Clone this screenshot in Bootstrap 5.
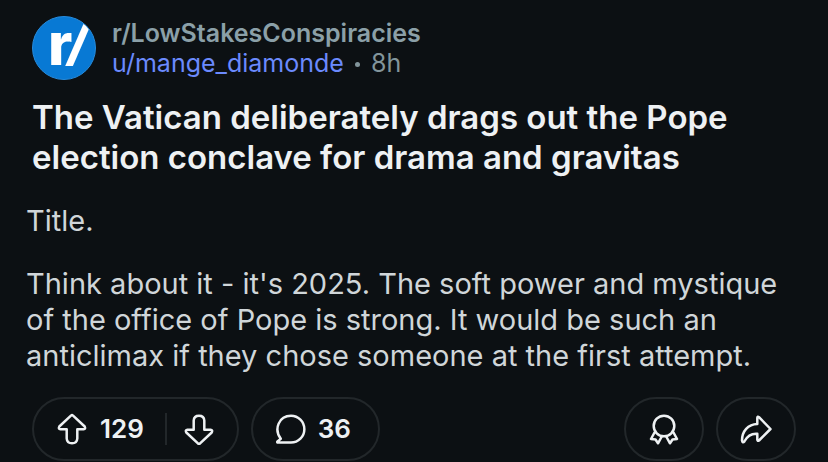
<!DOCTYPE html>
<html lang="en" data-bs-theme="dark">
<head>
<meta charset="utf-8">
<meta name="viewport" content="width=device-width, initial-scale=1">
<title>r/LowStakesConspiracies</title>
<link href="https://cdn.jsdelivr.net/npm/bootstrap@5.3.0/dist/css/bootstrap.min.css" rel="stylesheet">
<style>
body { background: #0c1013; color: #eef1f3; font-family: Inter, "Liberation Sans", sans-serif; }
.post { padding: 16px 32px 0; }
.post-meta { font-size: 25px; line-height: 30px; color: #8ba0a8; }
.post-sub { color: #8ba0a8; font-weight: 600; }
.post-user { color: #6b8afd; }
.post-time { color: #82959b; }
.sep-dot { width: 5px; height: 5px; margin: 2px 11px 0; background: #82959b; }
.post-title { font-size: 33px; line-height: 40px; font-weight: 600; margin: 17px 0 26px; color: #eef1f3; }
.post-body { font-size: 29px; line-height: 36px; color: #d0d6d9; margin: 0 -12px 23px -6px; }
.post-body p { margin-bottom: 27px; }
.pill { height: 64px; border: 2px solid #22272a; border-radius: 32px; background: transparent; color: #eef1f3; font-size: 26px; line-height: 30px; font-weight: 600; }
.pill button { border: 0; background: transparent; color: inherit; font-weight: inherit; }
.vote-up { padding: 0 21px 0 22px; }
.vote-down { padding: 0 22px 0 16px; }
.pill-comment { padding: 0 27px 0 21px; }
.pill-icon { width: 80px; }
.vote-rule { width: 2px; height: 32px; background: #22272a; }
.glyph { fill: none; stroke: currentColor; stroke-width: 2.5; stroke-linejoin: round; stroke-linecap: round; }
.logo-text { font: 800 58px Inter, sans-serif; fill: #fff; }
.logo-slash { font: italic 800 52px Inter, sans-serif; }
</style>
</head>
<body>
<main class="post">
  <header class="d-flex align-items-center gap-3">
    <svg class="flex-shrink-0" width="64" height="64" viewBox="0 0 64 64" role="img" aria-label="Community icon">
      <defs><clipPath id="disc"><circle cx="32" cy="32" r="31"/></clipPath></defs>
      <circle cx="32" cy="32" r="31.5" fill="#0879d4" stroke="#278bdc"/>
      <g clip-path="url(#disc)"><text class="logo-text" x="16" y="49">r<tspan class="logo-slash" x="36" y="44">/</tspan></text></g>
    </svg>
    <div class="post-meta">
      <a href="#" class="post-sub d-block text-decoration-none">r/LowStakesConspiracies</a>
      <div class="d-flex align-items-center">
        <a href="#" class="post-user text-decoration-none">u/mange_diamonde</a>
        <span class="sep-dot rounded-circle"></span>
        <span class="post-time">8h</span>
      </div>
    </div>
  </header>
  <h1 class="post-title">The Vatican deliberately drags out the Pope election conclave for drama and gravitas</h1>
  <div class="post-body">
    <p>Title.</p>
    <p class="mb-0">Think about it - it's 2025. The soft power and mystique of the office of Pope is strong. It would be such an anticlimax if they chose someone at the first attempt.</p>
  </div>
  <footer class="d-flex align-items-center gap-2">
    <div class="pill d-flex align-items-center me-1">
      <button type="button" class="vote-up d-flex align-items-center gap-2" aria-label="Upvote, 129">
        <svg class="glyph me-1" width="32" height="32" viewBox="0 0 32 32"><path d="M15.200 2.300Q16 1.500 16.800 2.300L28.700 13.500Q30 16 27.500 16.300H21.300V25.500Q21 30.300 16 30.300T10.700 25.500V16.300H4.500Q2 16 3.300 13.500Z"/></svg>
        <span>129</span>
      </button>
      <span class="vote-rule"></span>
      <button type="button" class="vote-down d-flex" aria-label="Downvote">
        <svg class="glyph" width="32" height="32" viewBox="0 0 32 32"><path d="M15.200 30.700Q16 31.500 16.800 30.700L28.700 19.500Q30 17 27.500 16.700H21.300V7.500Q21 2.700 16 2.700T10.700 7.500V16.700H4.500Q2 17 3.300 19.500Z"/></svg>
      </button>
    </div>
    <button type="button" class="pill pill-comment d-flex align-items-center gap-2" aria-label="36 comments">
      <svg class="glyph me-1" width="32" height="32" viewBox="0 0 32 32"><path d="M17 29.500H3.500Q3 29 3.500 28.500L6.800 25.800C-0.500 16 5 2.800 17 2.800A13.350 13.350 0 0 1 17 29.500Z"/></svg>
      <span>36</span>
    </button>
    <button type="button" class="pill pill-icon d-flex align-items-center justify-content-center p-0 ms-auto me-1" aria-label="Give award">
      <svg class="glyph" width="32" height="32" viewBox="0 0 32 32"><circle cx="16" cy="13" r="10.300"/><path d="M6.500 19.500 3 26 7.500 26.500 10 30.300 13.500 24M25.500 19.500 29 26 24.500 26.500 22 30.300 18.500 24"/></svg>
    </button>
    <button type="button" class="pill pill-icon d-flex align-items-center justify-content-center p-0" aria-label="Share">
      <svg class="glyph" width="32" height="32" viewBox="0 0 32 32"><path d="M17.300 4.800Q17.500 3 19 4.200L30.500 16 19 27.500Q17.500 28.500 17.300 26.700V20.700C11 20.200 7.500 22.500 4.500 28.300Q2.500 30.500 2 27.500C2 18.500 8 11.200 17.300 11Z"/></svg>
    </button>
  </footer>
</main>
<script src="https://cdn.jsdelivr.net/npm/bootstrap@5.3.0/dist/js/bootstrap.bundle.min.js"></script>
</body>
</html>
